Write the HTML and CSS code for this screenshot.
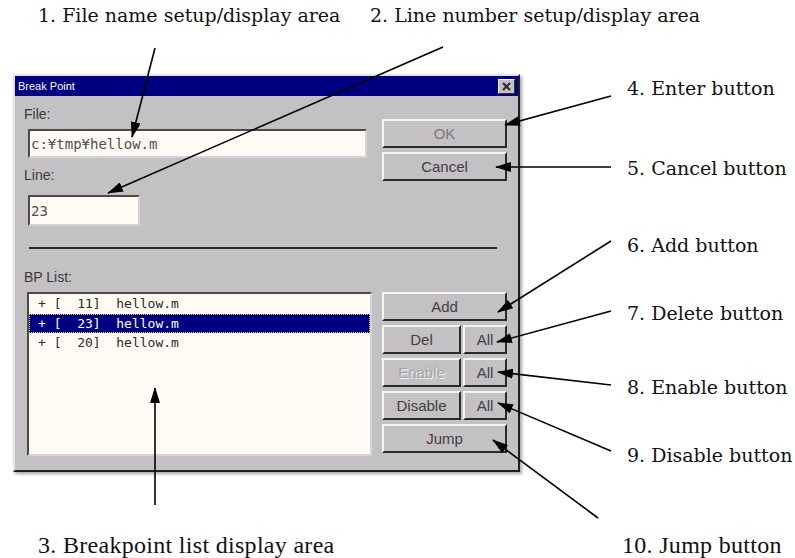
FILE: index.html
```html
<!DOCTYPE html>
<html lang="en">
<head>
    <meta charset="UTF-8">
    <title>Break Point dialog</title>
    <link rel="stylesheet" href="styles.css">
</head>
<body>
<div class="page">

    <!-- Callouts above the dialog -->
    <header class="notes-top">
        <span class="note">1. File name setup/display area</span>
        <span class="note">2. Line number setup/display area</span>
    </header>

    <main class="stage">
        <!-- The dialog itself -->
        <div class="dialog">
            <div class="titlebar">
                <span class="title">Break Point</span>
                <span class="close-btn">
                    <svg width="13" height="11" viewBox="0 0 13 11">
                        <path d="M3 2 L10 9 M10 2 L3 9" stroke="#303030" stroke-width="2.2"/>
                    </svg>
                </span>
            </div>
            <div class="dlg-body">
                <div class="dlg-top">
                    <div class="fields">
                        <label class="lbl">File:</label>
                        <div class="edit edit-file">c:¥tmp¥hellow.m</div>
                        <label class="lbl lbl-line">Line:</label>
                        <div class="edit edit-line">23</div>
                    </div>
                    <div class="btn-col btn-col-top">
                        <button class="btn btn-ok">OK</button>
                        <button class="btn">Cancel</button>
                    </div>
                </div>
                <div class="sep"></div>
                <div class="dlg-bottom">
                    <div class="list-col">
                        <label class="lbl">BP List:</label>
                        <ul class="bp-list">
                            <li>+ [  11]  hellow.m</li>
                            <li class="selected">+ [  23]  hellow.m</li>
                            <li>+ [  20]  hellow.m</li>
                        </ul>
                    </div>
                    <div class="btn-col btn-col-bottom">
                        <button class="btn">Add</button>
                        <div class="btn-pair">
                            <button class="btn btn-half">Del</button>
                            <button class="btn btn-all">All</button>
                        </div>
                        <div class="btn-pair">
                            <button class="btn btn-half btn-disabled">Enable</button>
                            <button class="btn btn-all">All</button>
                        </div>
                        <div class="btn-pair">
                            <button class="btn btn-half">Disable</button>
                            <button class="btn btn-all">All</button>
                        </div>
                        <button class="btn">Jump</button>
                    </div>
                </div>
            </div>
        </div>

        <!-- Callouts to the right -->
        <div class="notes-right">
            <span class="note">4. Enter button</span>
            <span class="note">5. Cancel button</span>
            <span class="note">6. Add button</span>
            <span class="note">7. Delete button</span>
            <span class="note">8. Enable button</span>
            <span class="note">9. Disable button</span>
        </div>
    </main>

    <!-- Callouts below -->
    <footer class="notes-bottom">
        <span class="note note-tall">3. Breakpoint list display area</span>
        <span class="note note-tall">10. Jump button</span>
    </footer>

    <!-- Leader lines from callouts to controls -->
    <svg class="leaders" width="795" height="558" viewBox="0 0 795 558">
        <defs>
            <marker id="head" markerUnits="userSpaceOnUse" markerWidth="16" markerHeight="10"
                    refX="15" refY="5" orient="auto">
                <path d="M0 0 L16 5 L0 10 z" fill="#000"/>
            </marker>
        </defs>
        <g stroke="#000" stroke-width="1.6" fill="none" marker-end="url(#head)">
            <line x1="155" y1="48" x2="132" y2="137"/>
            <line x1="443" y1="47" x2="108" y2="193"/>
            <line x1="155" y1="505" x2="155" y2="388"/>
            <line x1="611" y1="96" x2="505" y2="125"/>
            <line x1="611" y1="167" x2="496" y2="167"/>
            <line x1="611" y1="241" x2="498" y2="312"/>
            <line x1="611" y1="311" x2="497" y2="342"/>
            <line x1="611" y1="385" x2="498" y2="372"/>
            <line x1="611" y1="451" x2="498" y2="403"/>
            <line x1="598" y1="518" x2="493" y2="440"/>
        </g>
    </svg>
</div>
</body>
</html>
```

FILE: styles.css
```css
/* Basic Reset */
* {
    margin: 0;
    padding: 0;
    box-sizing: border-box;
}

body {
    background-color: #ffffff;
    font-family: "DejaVu Serif", serif;
}

.page {
    position: relative;
    width: 795px;
    height: 558px;
    overflow: hidden;
}

/* Callout text */
.note {
    font-family: "DejaVu Serif", serif;
    font-size: 19px;
    line-height: 24px;
    color: #111;
    white-space: nowrap;
}

.note-tall {
    font-family: "Liberation Serif", serif;
    font-size: 24px;
    line-height: 28px;
    letter-spacing: 0.3px;
}

.notes-top {
    display: grid;
    grid-template-columns: 332px auto;
    padding-left: 38px;
    padding-top: 3px;
    height: 30px;
}

.stage {
    display: flex;
    align-items: flex-start;
    margin-top: 44px;
}

.notes-right {
    display: grid;
    grid-template-rows: 80px 77px 68px 74px 68px 24px;
    margin-left: 107px;
    padding-top: 2px;
}

.notes-bottom {
    display: grid;
    grid-template-columns: 584px auto;
    padding-left: 38px;
    margin-top: 59px;
}

.leaders {
    position: absolute;
    left: 0;
    top: 0;
    pointer-events: none;
}

/* Dialog window */
.dialog {
    margin-left: 13px;
    width: 507px;
    height: 398px;
    background-color: #c4c1c4;
    border: 2px solid;
    border-color: #e4e4e4 #1e1e1e #1e1e1e #e4e4e4;
    box-shadow: 2px 2px 3px rgba(0, 0, 0, 0.35);
    font-family: "Liberation Sans", Arial, sans-serif;
    color: #3a3a3a;
}

.titlebar {
    display: flex;
    align-items: center;
    justify-content: space-between;
    height: 20px;
    background-color: #000080;
    padding: 0 3px;
}

.title {
    color: #ffffff;
    font-size: 11px;
}

.close-btn {
    display: flex;
    align-items: center;
    justify-content: center;
    width: 17px;
    height: 15px;
    background-color: #c4c1c4;
    border: 1px solid;
    border-color: #f4f4f4 #303030 #303030 #f4f4f4;
}

.dlg-body {
    padding: 8px 11px 0 9px;
}

.dlg-top,
.dlg-bottom {
    display: flex;
    justify-content: space-between;
}

.fields,
.list-col {
    width: 348px;
}

.lbl {
    display: block;
    height: 20px;
    line-height: 20px;
    font-size: 14px;
    color: #3a3a3a;
}

.lbl-line {
    margin-top: 7px;
}

/* Edit boxes */
.edit {
    margin-left: 4px;
    background-color: #fffbf4;
    border: 2px solid;
    border-color: #4a4a4a #d4d4d4 #d4d4d4 #4a4a4a;
    font-family: "DejaVu Sans Mono", monospace;
    font-size: 14px;
    color: #505050;
    padding-left: 1px;
    display: flex;
    align-items: center;
}

.edit-file {
    width: 339px;
    height: 29px;
    margin-top: 5px;
}

.edit-line {
    width: 112px;
    height: 31px;
    margin-top: 10px;
}

.sep {
    margin: 21px 10px 0 5px;
    border-top: 2px solid #2a2a2a;
}

.dlg-bottom {
    margin-top: 18px;
}

/* Breakpoint list */
.bp-list {
    list-style: none;
    margin: 5px 0 0 3px;
    width: 345px;
    height: 164px;
    background-color: #fffbf4;
    border: 2px solid;
    border-color: #4a4a4a #d4d4d4 #d4d4d4 #4a4a4a;
    font-family: "DejaVu Sans Mono", monospace;
    font-size: 13px;
    color: #2a2a2a;
}

.bp-list li {
    height: 19.5px;
    line-height: 19.5px;
    padding-left: 9px;
    white-space: pre;
}

.bp-list li.selected {
    background-color: #000080;
    color: #ffffff;
    outline: 1px dotted #e8d860;
    outline-offset: -1px;
}

/* Buttons */
.btn-col {
    width: 125px;
    display: flex;
    flex-direction: column;
}

.btn-col-top {
    padding-top: 15px;
    gap: 4px;
}

.btn-col-bottom {
    padding-top: 25px;
    gap: 4px;
}

.btn {
    height: 29px;
    width: 100%;
    background-color: #c4c1c4;
    border: 2px solid;
    border-color: #f4f4f4 #2a2a2a #2a2a2a #f4f4f4;
    font-family: "Liberation Sans", Arial, sans-serif;
    font-size: 15px;
    color: #404040;
}

.btn-ok {
    color: #7a7a7a;
}

.btn-pair {
    display: flex;
    gap: 2px;
}

.btn-half {
    width: 79px;
}

.btn-all {
    width: 44px;
}

.btn-disabled {
    color: #a4a4a4;
    text-shadow: 1px 1px 0 #f2f2f2;
}
```
